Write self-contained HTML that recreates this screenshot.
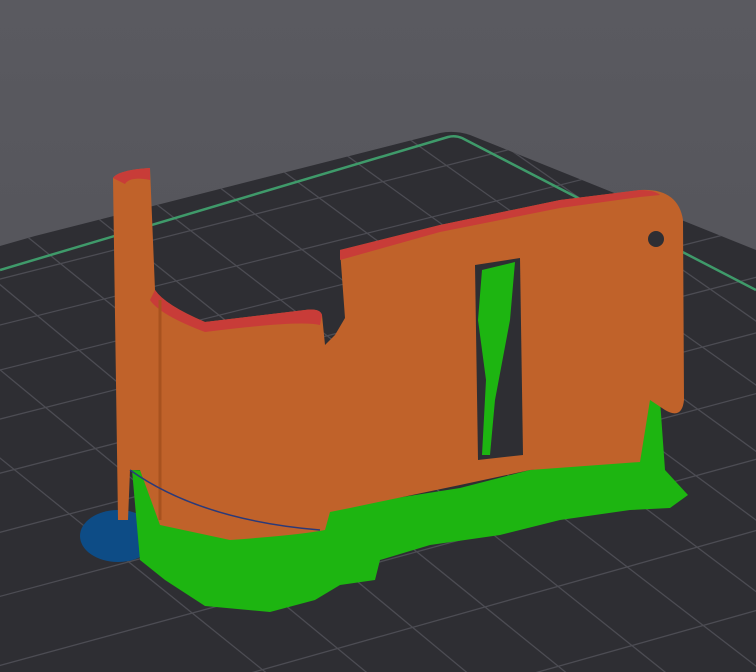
<!DOCTYPE html>
<html><head><style>html,body{margin:0;padding:0;background:#55555a;overflow:hidden;width:756px;height:672px}svg{display:block}</style></head><body>
<svg width="756" height="672" viewBox="0 0 756 672" xmlns="http://www.w3.org/2000/svg">
<defs>
<linearGradient id="bg" x1="0" y1="0" x2="0" y2="1"><stop offset="0" stop-color="#5a5a60"/><stop offset="1" stop-color="#4e4e54"/></linearGradient>
<clipPath id="bed"><path d="M0 246 L35 236 L440 133 Q455 130 470 135 L756 250 L756 672 L0 672 Z"/></clipPath>
</defs>
<rect width="756" height="672" fill="url(#bg)"/>
<path d="M0 246 L35 236 L440 133 Q455 130 470 135 L756 250 L756 672 L0 672 Z" fill="#2e2e33"/>
<g clip-path="url(#bed)" stroke="#4c4c53" stroke-width="1.3">
<line x1="-200" y1="330" x2="900" y2="50"/><line x1="-200" y1="375" x2="900" y2="100"/><line x1="-200" y1="420" x2="900" y2="145"/><line x1="-200" y1="470" x2="900" y2="190"/><line x1="-200" y1="525" x2="900" y2="240"/><line x1="-200" y1="585" x2="900" y2="295"/><line x1="-200" y1="650" x2="900" y2="355"/><line x1="-200" y1="720" x2="900" y2="420"/><line x1="-200" y1="800" x2="900" y2="490"/><line x1="-200" y1="880" x2="900" y2="570"/><line x1="-200" y1="970" x2="900" y2="660"/>
<line x1="-150" y1="160" x2="500" y2="700"/><line x1="-80" y1="150" x2="600" y2="700"/><line x1="0" y1="140" x2="700" y2="700"/><line x1="60" y1="130" x2="800" y2="700"/><line x1="130" y1="120" x2="900" y2="700"/><line x1="200" y1="110" x2="1000" y2="700"/><line x1="270" y1="100" x2="1100" y2="700"/><line x1="340" y1="90" x2="1200" y2="700"/><line x1="410" y1="80" x2="1300" y2="700"/><line x1="-230" y1="180" x2="400" y2="700"/><line x1="-320" y1="200" x2="300" y2="700"/>
</g>
<path d="M0 270 L448 137 Q455 135 462 138 L756 290" fill="none" stroke="#3f9a6a" stroke-width="2.5"/>
<ellipse cx="118" cy="536" rx="38" ry="26" fill="#0d4c86"/>
<path d="M132 470 L330 478 L335 430 L352 430 L352 505 L460 488 L530 470 L640 458 L645 400 L660 400 L665 470 L688 495 L670 508 L630 510 L560 520 L500 535 L430 545 L380 560 L375 580 L340 585 L315 600 L270 612 L205 606 L165 580 L140 560 Z" fill="#1db511"/>
<path d="M113 178 Q118 170 150 168 L155 290 Q165 305 205 322 L305 310 Q320 308 322 315 L325 345 L335 335 L345 318 L340 250 L440 225 L560 200 L640 190 Q678 188 683 220 L684 400 Q682 420 665 410 L650 400 L640 462 L530 470 L460 485 L350 508 L330 512 L325 530 Q300 535 230 540 L160 525 L140 470 L130 470 L128 520 L118 520 Z" fill="#c0622a"/>
<path d="M113 178 Q118 170 150 168 L150 180 Q130 176 125 184 Z" fill="#c83c38"/>
<path d="M155 290 Q165 305 205 322 L305 310 Q320 308 322 315 L320 325 Q300 320 205 332 Q160 315 150 300 Z" fill="#c83c38"/>
<path d="M340 250 L440 225 L560 200 L640 190 Q655 190 660 195 L640 197 L560 208 L440 232 L340 260 Z" fill="#c83c38"/>
<path d="M160 300 L160 520" stroke="#a8521f" stroke-width="3"/>
<path d="M475 265 L520 258 L523 455 L478 460 Z" fill="#2e2e33"/>
<path d="M482 270 L515 262 L510 320 L495 400 L490 455 L482 455 L486 380 L478 320 Z" fill="#1db511"/>
<circle cx="656" cy="239" r="8" fill="#2e2e33"/>
<path d="M130 470 Q200 520 320 530" fill="none" stroke="#2a3a7a" stroke-width="1.5"/>
</svg>
</body></html>
